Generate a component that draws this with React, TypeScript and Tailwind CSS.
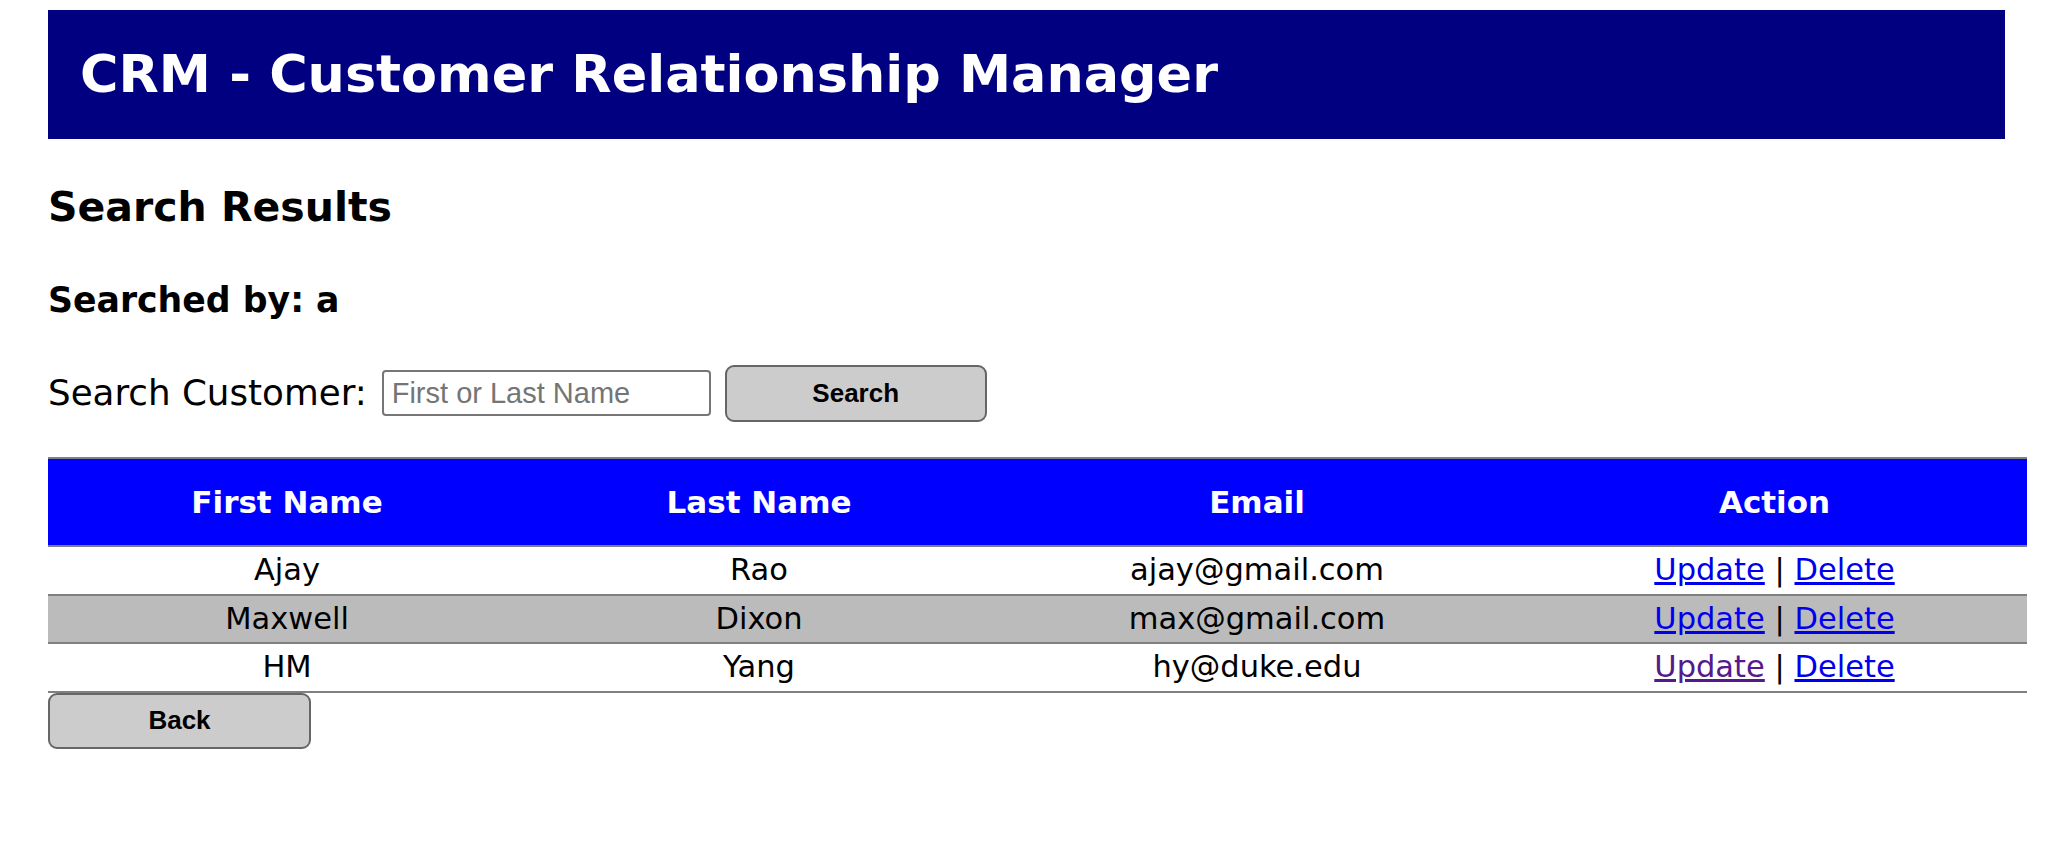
import React from "react";

type Customer = {
  firstName: string;
  lastName: string;
  email: string;
  visited?: boolean;
};

const customers: Customer[] = [
  { firstName: "Ajay", lastName: "Rao", email: "ajay@gmail.com" },
  { firstName: "Maxwell", lastName: "Dixon", email: "max@gmail.com" },
  { firstName: "HM", lastName: "Yang", email: "hy@duke.edu", visited: true },
];

export default function App() {
  return (
    <div className="min-h-[864px] bg-white pl-[48px] pt-[10px] font-['DejaVu_Sans',Verdana,sans-serif] text-black">
      {/* header bar */}
      <div className="flex h-[129px] w-[1957px] items-center bg-[#000080] pl-[32px]">
        <h1 className="text-[52.4px] font-bold leading-none text-white">
          CRM - Customer Relationship Manager
        </h1>
      </div>

      <h3 className="mt-[43px] text-[41px] font-bold leading-[50px]">
        Search Results
      </h3>
      <h4 className="mt-[46px] text-[34.7px] font-bold leading-[44px]">
        Searched by: a
      </h4>

      <form
        className="mt-[43px] flex h-[56px] items-center"
        onSubmit={(e) => e.preventDefault()}
      >
        <label className="text-[35.7px] leading-none">Search Customer:</label>
        <input
          type="text"
          placeholder="First or Last Name"
          className="ml-[15px] h-[46px] w-[329px] rounded-[4px] border-2 border-[#767676] bg-white px-[8px] font-['Liberation_Sans',Arial,sans-serif] text-[29px] placeholder:text-[#757575]"
        />
        <button
          type="submit"
          className="ml-[14px] h-[57px] w-[262px] rounded-[9px] border-2 border-[#666666] bg-[#cccccc] font-['Liberation_Sans',Arial,sans-serif] text-[26px] font-bold"
        >
          Search
        </button>
      </form>

      <table className="mt-[36px] w-[1979px] table-fixed border-separate border-spacing-0 text-center">
        <colgroup>
          <col className="w-[478px]" />
          <col className="w-[466px]" />
          <col className="w-[530px]" />
          <col className="w-[505px]" />
        </colgroup>
        <thead>
          <tr className="bg-[#0000ff] text-white">
            {["First Name", "Last Name", "Email", "Action"].map((h) => (
              <th
                key={h}
                className="border-y-2 border-[#808080] p-0 text-[31px] font-bold leading-[86px]"
              >
                {h}
              </th>
            ))}
          </tr>
        </thead>
        <tbody>
          {customers.map((c, i) => (
            <tr key={c.email} className={i % 2 === 1 ? "bg-[#bbbbbb]" : "bg-white"}>
              <td className="border-b-2 border-[#808080] p-0 text-[30.5px] leading-[46.5px]">
                {c.firstName}
              </td>
              <td className="border-b-2 border-[#808080] p-0 text-[30.5px] leading-[46.5px]">
                {c.lastName}
              </td>
              <td className="border-b-2 border-[#808080] p-0 text-[30.5px] leading-[46.5px]">
                {c.email}
              </td>
              <td className="border-b-2 border-[#808080] p-0 text-[30.5px] leading-[46.5px]">
                <a
                  href="#"
                  className={
                    c.visited
                      ? "text-[#551a8b] underline"
                      : "text-[#0000ee] underline"
                  }
                >
                  Update
                </a>{" "}
                |{" "}
                <a href="#" className="text-[#0000ee] underline">
                  Delete
                </a>
              </td>
            </tr>
          ))}
        </tbody>
      </table>

      <button
        type="button"
        className="block h-[56px] w-[263px] rounded-[9px] border-2 border-[#666666] bg-[#cccccc] font-['Liberation_Sans',Arial,sans-serif] text-[26px] font-bold"
      >
        Back
      </button>
    </div>
  );
}
